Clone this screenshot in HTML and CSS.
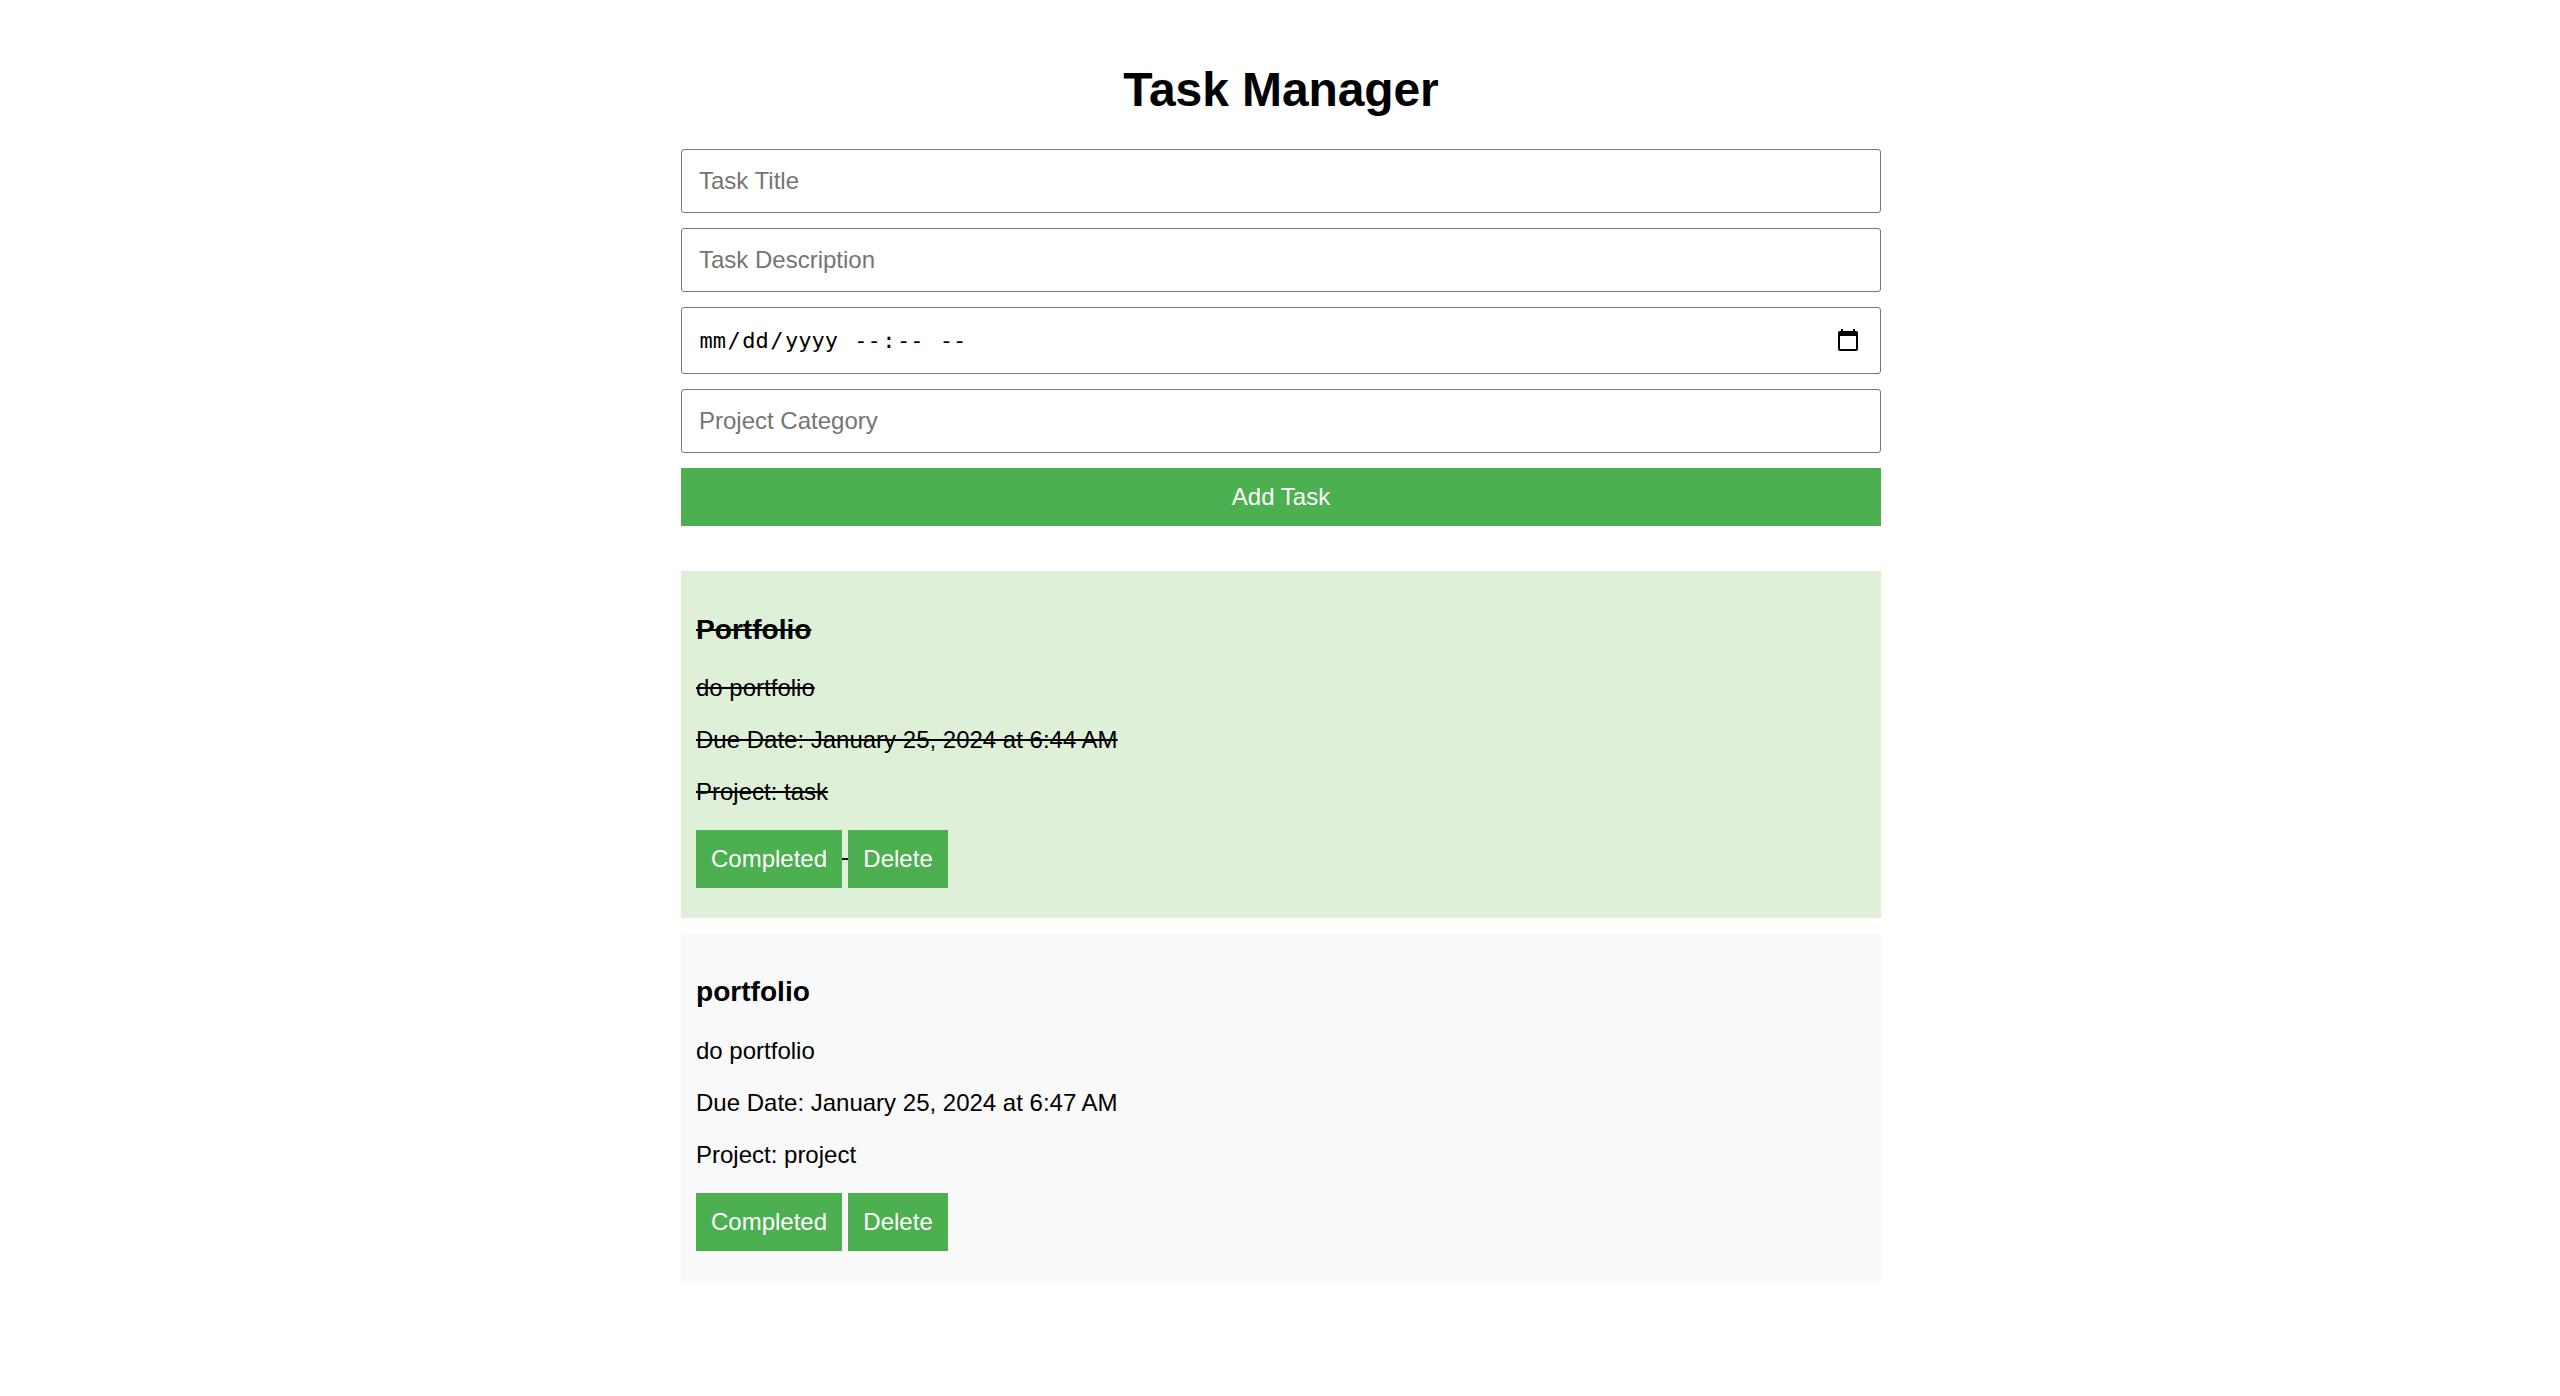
FILE: index.html
```html
<!DOCTYPE html>
<html lang="en">
<head>
<meta charset="utf-8">
<title>Task Manager</title>
<link rel="stylesheet" href="styles.css">
</head>
<body>
<main class="container">
  <h1 class="title">Task Manager</h1>
  <form class="task-form">
    <input class="field" type="text" placeholder="Task Title">
    <input class="field" type="text" placeholder="Task Description">
    <div class="field date-field">
      <span class="date-text"><span class="part">mm</span>/<span class="part">dd</span>/<span class="part">yyyy</span> <span class="part">--</span>:<span class="part">--</span> <span class="part">--</span></span>
      <svg class="calendar" viewBox="0 0 24 24"><path d="M20 3h-1V1h-2v2H7V1H5v2H4c-1.1 0-2 .9-2 2v16c0 1.1.9 2 2 2h16c1.1 0 2-.9 2-2V5c0-1.100-.9-2-2-2zm0 18H4V8h16v13z"/></svg>
    </div>
    <input class="field" type="text" placeholder="Project Category">
    <button class="button add" type="button">Add Task</button>
  </form>
  <section class="tasks">
    <article class="task done">
      <h3 class="name">Portfolio</h3>
      <p class="line">do portfolio</p>
      <p class="line">Due Date: January 25, 2024 at 6:44 AM</p>
      <p class="line">Project: task</p>
      <button class="button" type="button">Completed</button>
      <button class="button delete" type="button">Delete</button>
    </article>
    <article class="task">
      <h3 class="name">portfolio</h3>
      <p class="line">do portfolio</p>
      <p class="line">Due Date: January 25, 2024 at 6:47 AM</p>
      <p class="line">Project: project</p>
      <button class="button" type="button">Completed</button>
      <button class="button delete" type="button">Delete</button>
    </article>
  </section>
</main>
</body>
</html>
```
FILE: styles.css
```css
* {
  box-sizing: border-box;
}

body {
  margin: 0;
  background: #fff;
  color: #000;
  font: 24px/28px Arial, "Liberation Sans", sans-serif;
}

.container {
  width: 1202px;
  margin: 0 auto;
  padding: 62px 0 30px 2px;
}

.title {
  margin: 0 0 32px;
  font-size: 48px;
  line-height: 55px;
  letter-spacing: -0.1px;
  text-align: center;
}

.task-form {
  display: flex;
  flex-direction: column;
  gap: 15px;
}

.field {
  width: 100%;
  height: 64px;
  padding: 15px 16px 15px 17px;
  border: 1px solid #767676;
  border-radius: 3px;
  background: #fff;
  font: inherit;
}

.field::placeholder {
  color: #757575;
}

.date-field {
  display: flex;
  align-items: center;
  justify-content: space-between;
  height: 67px;
  padding-left: 16px;
}

.date-text {
  font: 22px/30px "DejaVu Sans Mono", monospace;
  white-space: pre;
}

.part {
  padding: 0 1.5px;
}

.calendar {
  width: 24px;
  height: 24px;
  margin: 0 4px 1px 0;
}

.button {
  height: 58px;
  margin: 0 0 15px;
  padding: 15px;
  border: 0;
  background: #4caf50;
  color: #fff;
  font: inherit;
}

.add {
  margin: 0;
}

.delete {
  min-width: 100px;
  margin-left: -0.7px;
}

.tasks {
  display: flex;
  flex-direction: column;
  gap: 15px;
  margin-top: 45px;
}

.task {
  padding: 15px;
  background: #f9f9f9;
}

.done {
  background: #dff0d8;
  text-decoration: line-through;
}

.name {
  margin: 28.08px 0;
  font-size: 28.08px;
  line-height: 32.2px;
}

.line {
  margin: 0 0 24px;
}
```
